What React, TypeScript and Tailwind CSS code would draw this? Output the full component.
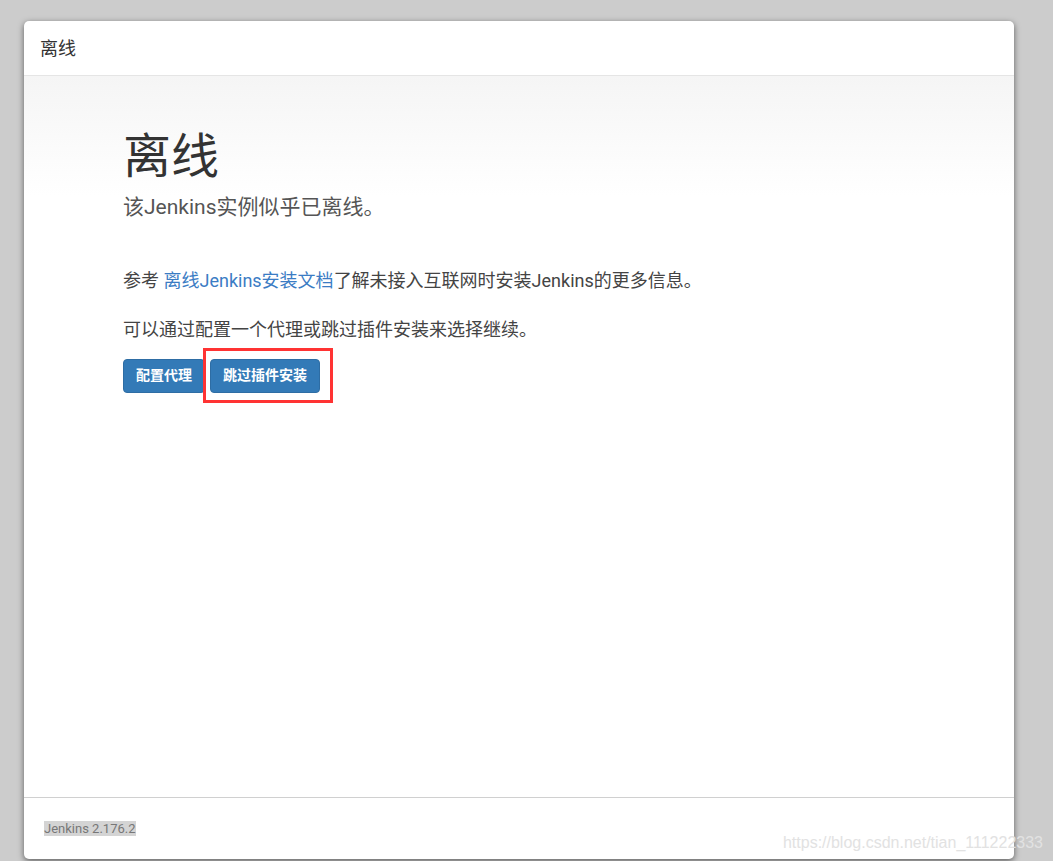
export default function App() {
  return (
    <div
      className="relative h-[861px] w-[1053px] overflow-hidden bg-[#cccccc] pt-[21px] pl-[24px]"
      style={{ fontFamily: 'Roboto, "Noto Sans CJK SC", sans-serif' }}
    >
      {/* 对话框 */}
      <div className="flex h-[838px] w-[990px] flex-col rounded-[5px] bg-white shadow-[0_2px_6px_rgba(0,0,0,0.55)]">
        <div className="flex h-[55px] shrink-0 items-center border-b border-[#e5e5e5] px-[16px] text-[18px] text-[#333]">
          离线
        </div>

        <div className="flex-1 bg-gradient-to-b from-[#f5f5f5] to-white to-[120px] px-[99px] pt-[53px] text-[#333]">
          <h1 className="text-[48px] leading-[1.15] font-normal">离线</h1>
          <p className="mt-[9px] text-[21px] leading-[1.4] text-[#555]">该Jenkins实例似乎已离线。</p>

          <p className="mt-[45px] text-[18px] leading-[26px] text-[#444]">
            参考 <a className="text-[#3b7cc4]">离线Jenkins安装文档</a>了解未接入互联网时安装Jenkins的更多信息。
          </p>
          <p className="mt-[23px] text-[18px] leading-[26px] text-[#444]">可以通过配置一个代理或跳过插件安装来选择继续。</p>

          <div className="mt-[16px] flex items-center gap-[5px]">
            <button className="h-[34px] rounded-[4px] border border-[#2e6da4] bg-[#337ab7] px-[12px] text-[14px] font-bold text-white">
              配置代理
            </button>
            <div className="relative">
              <button className="block h-[34px] rounded-[4px] border border-[#2e6da4] bg-[#337ab7] px-[12px] text-[14px] font-bold text-white">
                跳过插件安装
              </button>
              {/* 标注框 */}
              <span className="pointer-events-none absolute -top-[11px] -right-[13px] -bottom-[10px] -left-[7px] border-[3px] border-[#ff3333]" />
            </div>
          </div>
        </div>

        <div className="flex h-[62px] shrink-0 items-center border-t border-[#d0d0d0] px-[20px]">
          <span className="bg-[#d4d4d4] text-[13px] leading-[15px] text-[#777]">Jenkins 2.176.2</span>
        </div>
      </div>

      {/* 水印 */}
      <span
        className="absolute top-[833px] right-[10px] text-[16px] leading-[20px] whitespace-nowrap text-[#e2e2e2]"
        style={{ fontFamily: '"Liberation Sans", Arial, sans-serif' }}
      >
        https://blog.csdn.net/tian_111222333
      </span>
    </div>
  );
}
